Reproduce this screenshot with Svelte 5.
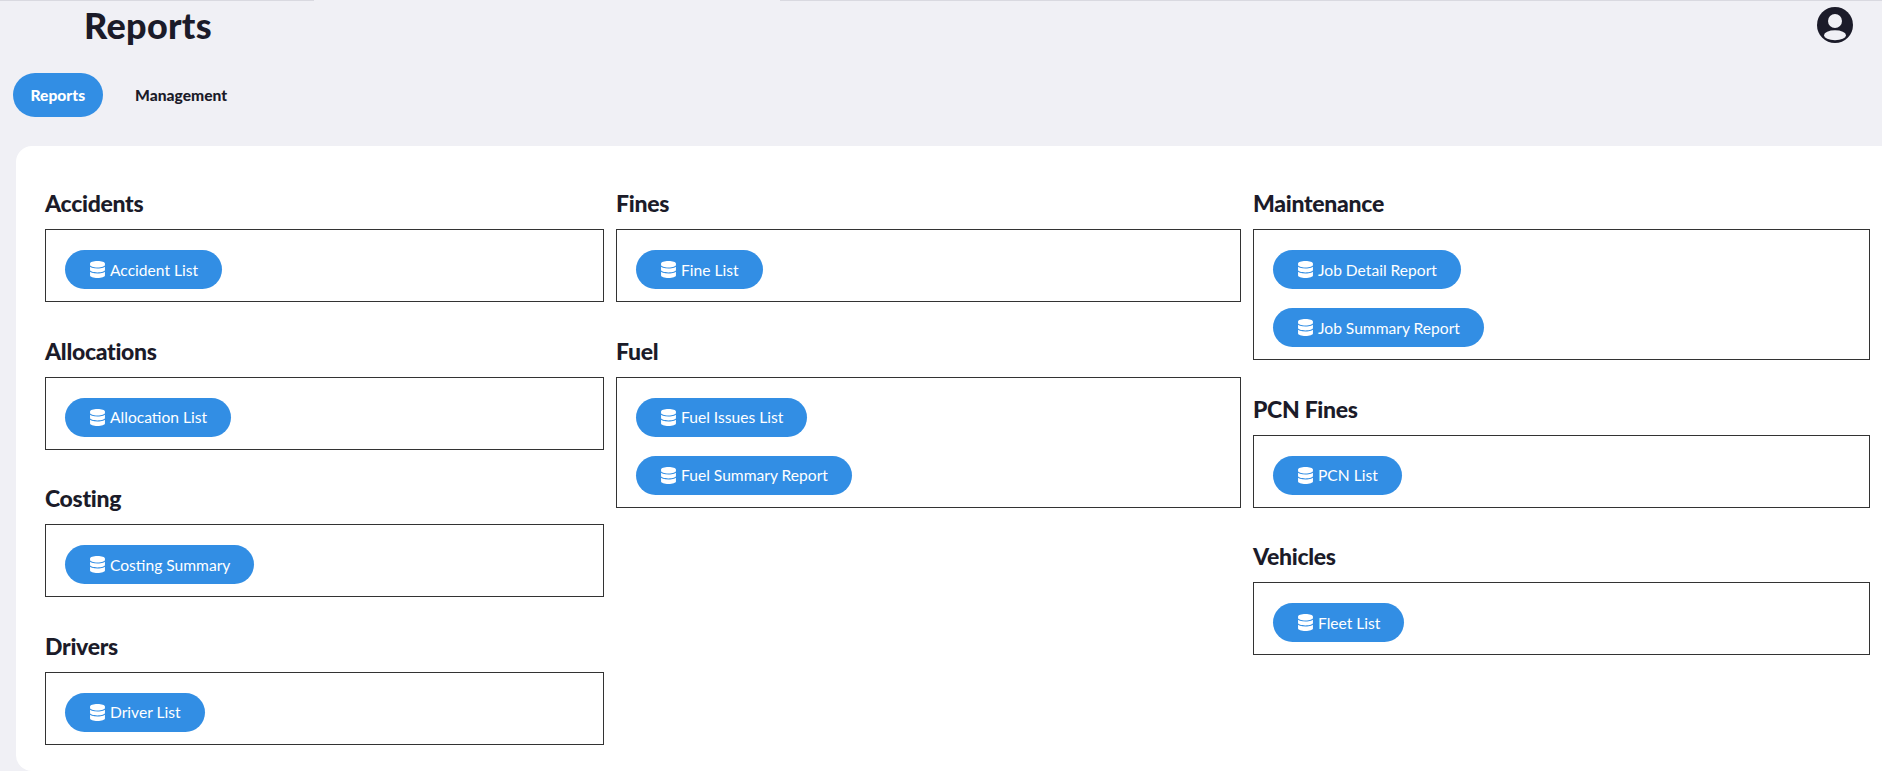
<script>
  const columns = [
    [
      { title: 'Accidents', items: ['Accident List'] },
      { title: 'Allocations', items: ['Allocation List'] },
      { title: 'Costing', items: ['Costing Summary'] },
      { title: 'Drivers', items: ['Driver List'] }
    ],
    [
      { title: 'Fines', items: ['Fine List'] },
      { title: 'Fuel', items: ['Fuel Issues List', 'Fuel Summary Report'] }
    ],
    [
      { title: 'Maintenance', items: ['Job Detail Report', 'Job Summary Report'] },
      { title: 'PCN Fines', items: ['PCN List'] },
      { title: 'Vehicles', items: ['Fleet List'] }
    ]
  ];
</script>

<div class="page">
  <div class="topline"><span class="seg"></span><span class="gap"></span><span class="seg rest"></span></div>
  <header class="header">
    <h1>Reports</h1>
    <svg class="avatar" viewBox="0 0 36 36" aria-label="Account">
      <circle cx="18" cy="18" r="18" fill="#1b1b29" />
      <circle cx="18" cy="14" r="7" fill="#f0f0f5" />
      <ellipse cx="18" cy="28.3" rx="11" ry="5" fill="#f0f0f5" />
    </svg>
  </header>
  <nav class="tabs">
    <button class="tab active">Reports</button>
    <button class="tab">Management</button>
  </nav>
  <main class="panel">
    {#each columns as col}
      <div class="col">
        {#each col as group}
          <section class="group">
            <h2>{group.title}</h2>
            <div class="box">
              {#each group.items as item}
                <button class="report">
                  <svg class="db" viewBox="0 0 448 512" aria-hidden="true">
                    <path fill="currentColor" d="M448 73v46c0 40-100 73-224 73S0 159 0 119V73C0 33 100 0 224 0s224 33 224 73zm-55 129c21-7 40-17 55-28v98c0 40-100 73-224 73S0 312 0 272v-98c15 11 34 21 55 28 45 16 104 24 169 24s124-8 169-24zM55 355c45 16 104 24 169 24s124-8 169-24c21-7 40-17 55-28v112c0 40-100 73-224 73S0 479 0 439V327c15 11 34 21 55 28z" />
                  </svg>
                  <span>{item}</span>
                </button>
              {/each}
            </div>
          </section>
        {/each}
      </div>
    {/each}
  </main>
</div>

<style>
  :global(body) {
    margin: 0;
    background: #f0f0f5;
    font-family: Lato, "Noto Sans", sans-serif;
    color: #1b1b29;
  }
  .page {
    height: 771px;
    overflow: hidden;
    display: flex;
    flex-direction: column;
  }
  .topline {
    display: flex;
    height: 1px;
    flex: none;
  }
  .seg {
    width: 314px;
    background: #d9d9e0;
  }
  .gap {
    width: 466px;
  }
  .seg.rest {
    flex: 1;
  }
  .header {
    display: flex;
    justify-content: space-between;
    align-items: center;
    height: 48px;
    padding: 0 29px 0 84px;
    flex: none;
  }
  h1 {
    margin: 0;
    font-size: 36px;
    font-weight: 900;
    letter-spacing: 0.3px;
    line-height: 50px;
  }
  .avatar {
    width: 36px;
    height: 36px;
  }
  .tabs {
    display: flex;
    gap: 15px;
    padding: 24px 0 0 13px;
    flex: none;
  }
  .tab {
    border: 0;
    background: transparent;
    font: 900 15.6px Lato, sans-serif;
    color: #1b1b29;
    height: 44px;
    padding: 0 17.5px;
    border-radius: 22px;
  }
  .tab.active {
    background: #328ee4;
    color: #fff;
  }
  .panel {
    flex: 1;
    margin: 29px 0 0 16px;
    background: #fff;
    border-radius: 16px 0 0 16px;
    padding: 41px 12px 0 29px;
    display: grid;
    grid-template-columns: 559px 625px 617px;
    gap: 12px;
    align-items: start;
  }
  .col {
    display: flex;
    flex-direction: column;
    gap: 32.5px;
  }
  h2 {
    margin: 0 0 10px;
    font-size: 23px;
    font-weight: 900;
    letter-spacing: -0.3px;
    line-height: 32px;
    color: #1b1b29;
  }
  .box {
    border: 1px solid #333;
    padding: 20px 18px 12px 19px;
    display: flex;
    flex-direction: column;
    align-items: flex-start;
    gap: 19px;
  }
  .report {
    display: flex;
    align-items: center;
    gap: 5px;
    height: 39px;
    padding: 0 24px 0 25px;
    border: 0;
    border-radius: 20px;
    background: #328ee4;
    color: #fff;
    font: 400 15.6px Lato, sans-serif;
  }
  .db {
    width: 15px;
    height: 17px;
  }
</style>
